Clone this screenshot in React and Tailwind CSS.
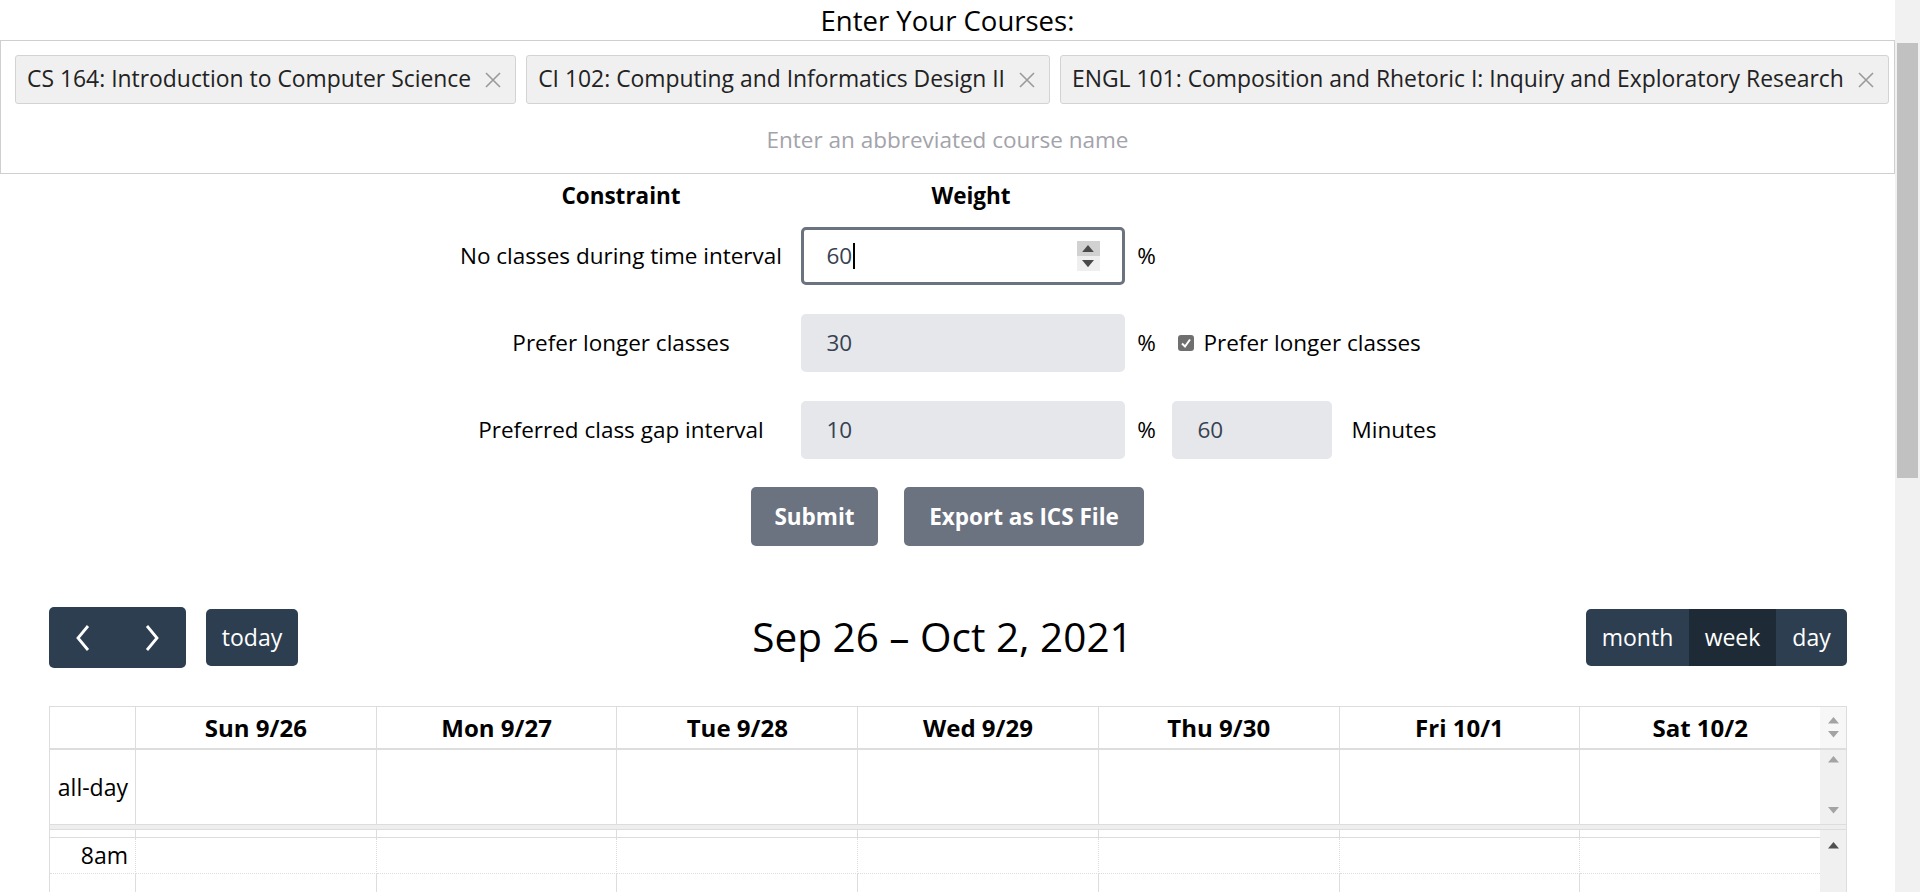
import React from "react";

const courses = [
    "CS 164: Introduction to Computer Science",
    "CI 102: Computing and Informatics Design II",
    "ENGL 101: Composition and Rhetoric I: Inquiry and Exploratory Research",
];

const days = ["Sun 9/26", "Mon 9/27", "Tue 9/28", "Wed 9/29", "Thu 9/30", "Fri 10/1", "Sat 10/2"];

function XIcon() {
    return (
        <svg width="18" height="18" viewBox="0 0 18 18" className="shrink-0">
            <path d="M2 2 L16 16 M16 2 L2 16" stroke="#9a9a9a" strokeWidth="1.6" fill="none" />
        </svg>
    );
}

function Tri({ up, color = "#a3a3a3", size = 12 }) {
    return (
        <svg width={size} height={size * 0.6} viewBox="0 0 10 6">
            {up ? <path d="M0 6 L5 0 L10 6 Z" fill={color} /> : <path d="M0 0 L5 6 L10 0 Z" fill={color} />}
        </svg>
    );
}

function Chevron({ right }) {
    return (
        <svg width="16" height="30" viewBox="0 0 16 30">
            <path d={right ? "M3 3 L13 15 L3 27" : "M13 3 L3 15 L13 27"} stroke="white" strokeWidth="2.8" fill="none" />
        </svg>
    );
}

function DayCols({ h }) {
    return (
        <div className={`flex ${h}`}>
            <div className="w-[86px] border-r border-[#dddddd]" />
            {days.map((d) => (
                <div key={d} className="flex-1 border-r border-[#dddddd] last:border-r-0" />
            ))}
        </div>
    );
}

export default function App() {
    return (
        <div className="flex h-[892px] overflow-hidden bg-white text-black font-['Open_Sans',sans-serif]">
            <div className="flex-1 min-w-0">
                <div className="h-[40px] text-center text-[27.5px] leading-[42px]">Enter Your Courses:</div>

                {/* course picker */}
                <div className="border border-[#cfcfcf] h-[134px] px-[14px] pt-[14px]">
                    <div className="flex gap-[10px]">
                        {courses.map((c) => (
                            <div key={c} className="flex items-center gap-[13px] h-[49px] pl-[11px] pr-[13px] bg-[#f0f0f0] border border-[#d3d3d3] rounded-[3px] text-[22.9px] text-[#222]">
                                <span className="whitespace-nowrap">{c}</span>
                                <XIcon />
                            </div>
                        ))}
                    </div>
                    <div className="mt-[21px] text-center text-[22.5px] leading-[30px] text-[#a3a3ab]">Enter an abbreviated course name</div>
                </div>

                {/* constraints */}
                <div className="w-[1000px] mx-auto text-[22.5px]">
                    <div className="flex h-[44px] items-center font-bold">
                        <div className="w-[347px] text-center">Constraint</div>
                        <div className="w-[340px] pl-[13px] text-center">Weight</div>
                    </div>

                    <div className="mt-[9px] flex flex-col gap-[29px]">
                        <div className="flex items-center h-[58px]">
                            <div className="w-[347px] text-center whitespace-nowrap">No classes during time interval</div>
                            <div className="w-[340px] pl-[6px]">
                                <div className="w-[324px] h-[58px] border-[3px] border-[#6b7280] rounded-[5px] flex items-center pl-[23px] pr-[22px] bg-white">
                                    <span className="text-[#374151]">60</span>
                                    <span className="w-[1.5px] h-[26px] bg-black ml-[1px]" />
                                    <div className="ml-auto flex flex-col w-[23px] h-[30px]">
                                        <div className="flex-1 bg-[#d1d1d1] flex items-center justify-center"><Tri up color="#4a4a4a" size={12} /></div>
                                        <div className="flex-1 bg-[#efefef] flex items-center justify-center"><Tri color="#4a4a4a" size={12} /></div>
                                    </div>
                                </div>
                            </div>
                            <div className="w-[24px] text-center">%</div>
                        </div>

                        <div className="flex items-center h-[58px]">
                            <div className="w-[347px] text-center">Prefer longer classes</div>
                            <div className="w-[340px] pl-[6px]">
                                <div className="w-[324px] h-[58px] bg-[#e5e7eb] rounded-[5px] flex items-center pl-[26px] text-[#374151]">30</div>
                            </div>
                            <div className="w-[24px] text-center">%</div>
                            <div className="flex items-center pl-[19px] gap-[10px]">
                                <span className="w-[16px] h-[16px] rounded-[3px] bg-[#6f6f6f] flex items-center justify-center">
                                    <svg width="12" height="12" viewBox="0 0 12 12"><path d="M2 6.5 L5 9.5 L10 2.5" stroke="white" strokeWidth="2" fill="none" /></svg>
                                </span>
                                <span className="whitespace-nowrap">Prefer longer classes</span>
                            </div>
                        </div>

                        <div className="flex items-center h-[58px]">
                            <div className="w-[347px] text-center">Preferred class gap interval</div>
                            <div className="w-[340px] pl-[6px]">
                                <div className="w-[324px] h-[58px] bg-[#e5e7eb] rounded-[5px] flex items-center pl-[26px] text-[#374151]">10</div>
                            </div>
                            <div className="w-[24px] text-center">%</div>
                            <div className="flex items-center pl-[13px] gap-[20px]">
                                <div className="w-[160px] h-[58px] bg-[#e5e7eb] rounded-[5px] flex items-center pl-[26px] text-[#374151]">60</div>
                                <span>Minutes</span>
                            </div>
                        </div>
                    </div>
                </div>

                <div className="mt-[28px] flex justify-center gap-[26px]">
                    <button className="w-[127px] h-[59px] rounded-[5px] bg-[#6b7280] text-white font-bold text-[22.5px]">Submit</button>
                    <button className="w-[240px] h-[59px] rounded-[5px] bg-[#6b7280] text-white font-bold text-[22.5px]">Export as ICS File</button>
                </div>

                {/* calendar */}
                <div className="pl-[49px] pr-[48px] mt-[61px]">
                    <div className="flex items-center h-[61px]">
                        <div className="flex-1 flex items-center gap-[20px]">
                            <div className="flex h-[61px] w-[137px] rounded-[5px] bg-[#2c3e50]">
                                <div className="flex-1 flex items-center justify-center"><Chevron /></div>
                                <div className="flex-1 flex items-center justify-center"><Chevron right /></div>
                            </div>
                            <button className="h-[57px] w-[92px] rounded-[5px] bg-[#2c3e50] text-white text-[23px]">today</button>
                        </div>
                        <div className="text-[40.5px] leading-none mr-[11px]">Sep 26 – Oct 2, 2021</div>
                        <div className="flex-1 flex justify-end">
                            <div className="flex h-[57px] rounded-[5px] overflow-hidden bg-[#2c3e50] text-white text-[23px]">
                                <div className="w-[103px] flex items-center justify-center">month</div>
                                <div className="w-[87px] flex items-center justify-center bg-[#1e2b37]">week</div>
                                <div className="w-[71px] flex items-center justify-center">day</div>
                            </div>
                        </div>
                    </div>

                    <div className="mt-[38px] border border-[#dddddd]">
                        {/* header */}
                        <div className="flex h-[43px] border-b-2 border-[#dddddd]">
                            <div className="flex-1 flex">
                                <div className="w-[86px] border-r border-[#dddddd]" />
                                {days.map((d) => (
                                    <div key={d} className="flex-1 border-r border-[#dddddd] last:border-r-0 flex items-center justify-center font-bold text-[24px]">{d}</div>
                                ))}
                            </div>
                            <div className="w-[26px] bg-[#f7f7f7] flex flex-col items-center justify-between py-[10px]">
                                <Tri up size={11} />
                                <Tri size={11} />
                            </div>
                        </div>
                        {/* all-day */}
                        <div className="flex h-[74px]">
                            <div className="flex-1 flex">
                                <div className="w-[86px] border-r border-[#dddddd] flex items-center justify-end pr-[7px] text-[23px]">all-day</div>
                                {days.map((d) => (
                                    <div key={d} className="flex-1 border-r border-[#dddddd] last:border-r-0" />
                                ))}
                            </div>
                            <div className="w-[26px] bg-[#f0f0f0] flex flex-col items-center justify-between pt-[6px] pb-[10px]">
                                <Tri up size={11} />
                                <Tri size={11} />
                            </div>
                        </div>
                        {/* divider */}
                        <div className="h-[6px] bg-[#eeeeee] border-y border-[#dddddd]" />
                        {/* time grid */}
                        <div className="flex">
                            <div className="flex-1">
                                <DayCols h="h-[7px]" />
                                <div className="flex h-[37px] border-t border-[#dddddd]">
                                    <div className="w-[86px] border-r border-[#dddddd] border-b border-b-[#dddddd] border-dotted flex items-center justify-end pr-[7px] text-[23px]">8am</div>
                                    {days.map((d) => (
                                        <div key={d} className="flex-1 border-r border-[#dddddd] last:border-r-0 border-b border-b-[#dddddd] border-dotted" />
                                    ))}
                                </div>
                                <div className="flex h-[37px]">
                                    <div className="w-[86px] border-r border-[#dddddd]" />
                                    {days.map((d) => (
                                        <div key={d} className="flex-1 border-r border-[#dddddd] last:border-r-0" />
                                    ))}
                                </div>
                            </div>
                            <div className="w-[26px] bg-[#f0f0f0] flex flex-col items-center pt-[12px]">
                                <Tri up color="#505050" size={11} />
                            </div>
                        </div>
                    </div>
                </div>
            </div>

            {/* page scrollbar */}
            <div className="w-[25px] bg-[#f1f1f1] shrink-0">
                <div className="mt-[43px] ml-[2px] w-[21px] h-[435px] bg-[#c1c1c1]" />
            </div>
        </div>
    );
}
